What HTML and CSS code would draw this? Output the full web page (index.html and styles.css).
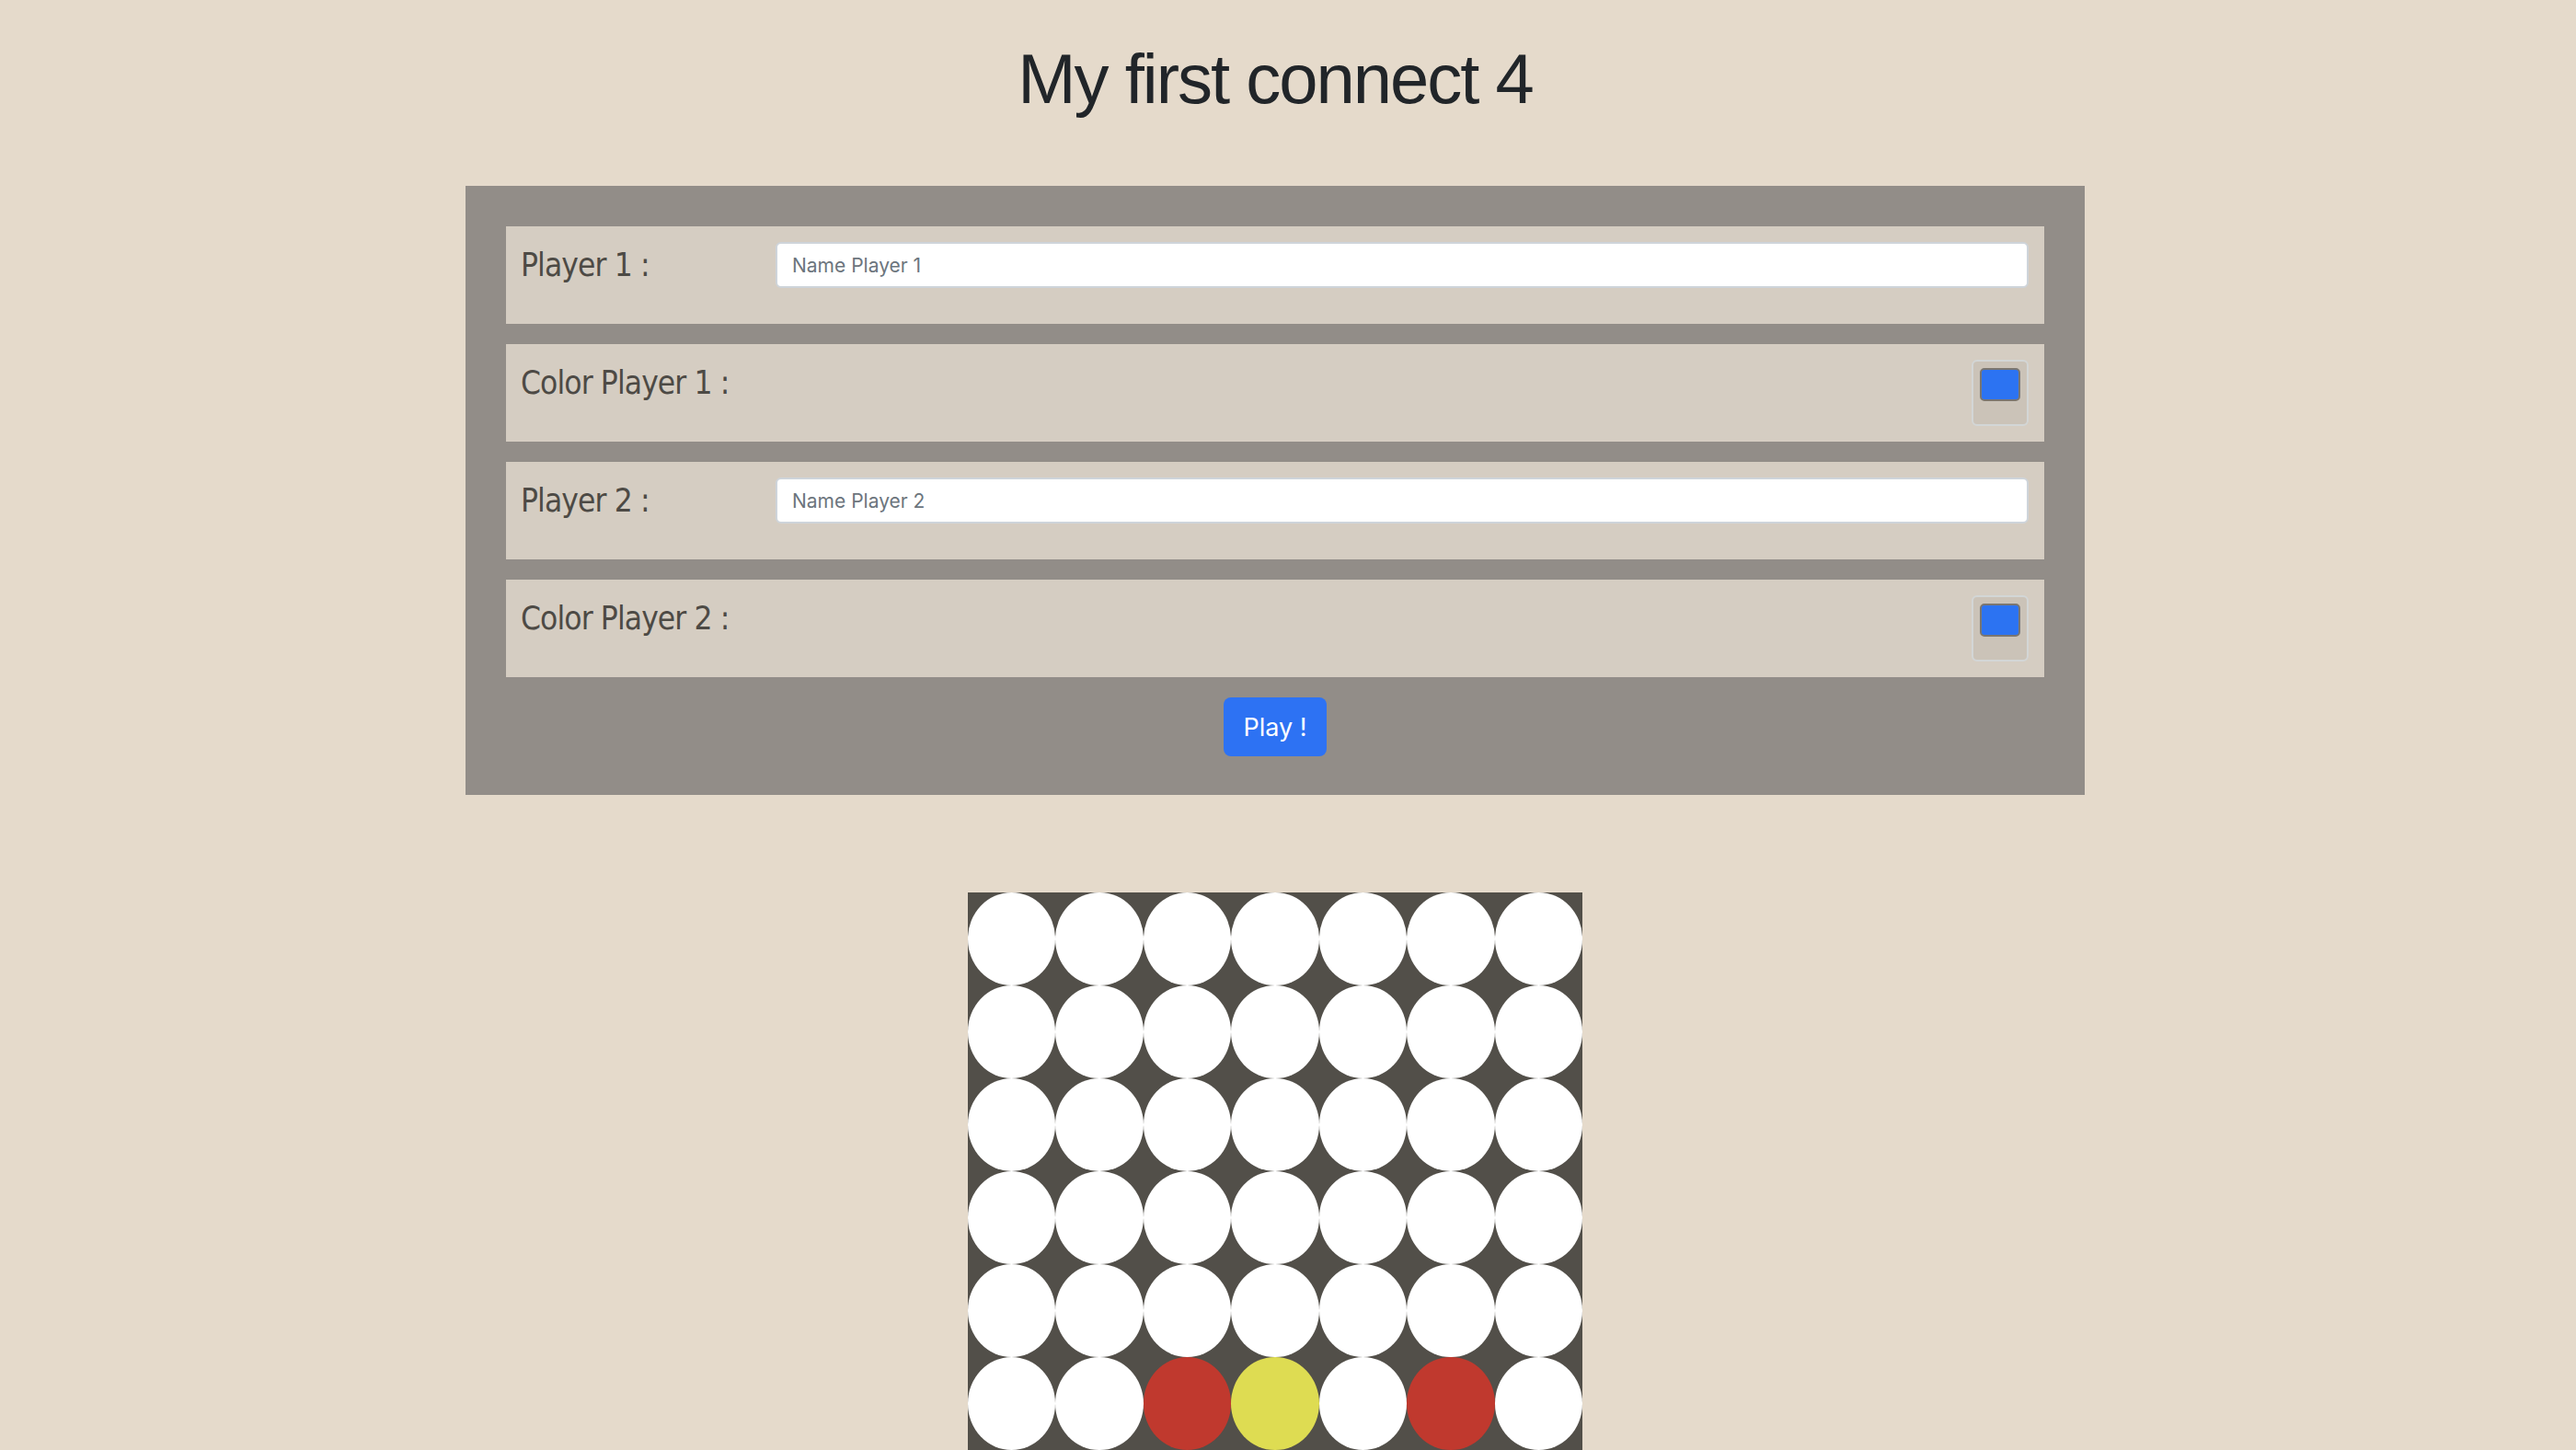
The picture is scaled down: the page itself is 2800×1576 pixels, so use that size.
FILE: index.html
```html
<!DOCTYPE html>
<html lang="en">
<head>
<meta charset="utf-8">
<title>My first connect 4</title>
<link rel="stylesheet" href="styles.css">
</head>
<body>
<div class="page">
  <h1 class="title">My first connect 4</h1>
  <form class="setup">
    <div class="row">
      <label class="label" for="p1">Player 1 :</label>
      <input class="name" id="p1" type="text" placeholder="Name Player 1">
    </div>
    <div class="row">
      <span class="label">Color Player 1 :</span>
      <div class="picker"><div class="swatch"></div></div>
    </div>
    <div class="row">
      <label class="label" for="p2">Player 2 :</label>
      <input class="name" id="p2" type="text" placeholder="Name Player 2">
    </div>
    <div class="row">
      <span class="label">Color Player 2 :</span>
      <div class="picker"><div class="swatch"></div></div>
    </div>
    <div class="actions">
      <button class="play" type="button">Play !</button>
    </div>
  </form>
  <div class="board">
    <div class="cell"></div><div class="cell"></div><div class="cell"></div><div class="cell"></div><div class="cell"></div><div class="cell"></div><div class="cell"></div>
    <div class="cell"></div><div class="cell"></div><div class="cell"></div><div class="cell"></div><div class="cell"></div><div class="cell"></div><div class="cell"></div>
    <div class="cell"></div><div class="cell"></div><div class="cell"></div><div class="cell"></div><div class="cell"></div><div class="cell"></div><div class="cell"></div>
    <div class="cell"></div><div class="cell"></div><div class="cell"></div><div class="cell"></div><div class="cell"></div><div class="cell"></div><div class="cell"></div>
    <div class="cell"></div><div class="cell"></div><div class="cell"></div><div class="cell"></div><div class="cell"></div><div class="cell"></div><div class="cell"></div>
    <div class="cell"></div><div class="cell"></div><div class="cell red"></div><div class="cell yellow"></div><div class="cell"></div><div class="cell red"></div><div class="cell"></div>
  </div>
</div>
</body>
</html>
```

FILE: styles.css
```css
html {
  overflow: hidden;
}

body {
  margin: 0;
  background: #e5dacb;
  font-family: Inter, "Liberation Sans", sans-serif;
}

.page {
  width: 2772px;
  display: flex;
  flex-direction: column;
  align-items: center;
}

.title {
  margin: 0;
  padding-top: 40px;
  font-family: "Liberation Sans", Arial, sans-serif;
  font-weight: 400;
  font-size: 76px;
  letter-spacing: -2px;
  line-height: 92px;
  color: #212529;
  text-align: center;
}

.setup {
  margin-top: 70px;
  width: 1760px;
  box-sizing: border-box;
  background: #928d88;
  padding: 44px 44px 42px;
  display: flex;
  flex-direction: column;
  gap: 22px;
}

.row {
  height: 106px;
  box-sizing: border-box;
  background: #d5cdc2;
  padding: 16px;
  display: flex;
  align-items: flex-start;
}

.label {
  width: 277px;
  flex: none;
  font-family: "DejaVu Sans Condensed", "DejaVu Sans", sans-serif;
  font-size: 35px;
  letter-spacing: -0.9px;
  line-height: 52px;
  color: #4d4a45;
}

.name {
  flex: 1;
  height: 50px;
  margin: 1px 1px 0 0;
  box-sizing: border-box;
  border: 2px solid #ced4da;
  border-radius: 6px;
  background: #fff;
  padding: 0 16px;
  font-family: Inter, "Liberation Sans", sans-serif;
  font-size: 21px;
  color: #495057;
  outline: none;
}

.name::placeholder {
  color: #6c757d;
}

.picker {
  margin: 1px 1px 0 auto;
  width: 62px;
  height: 72px;
  box-sizing: border-box;
  background: #cbc3b8;
  border: 2px solid #d3d6d6;
  border-radius: 6px;
  padding: 7px;
}

.swatch {
  width: 44px;
  height: 36px;
  box-sizing: border-box;
  background: #2c73f2;
  border: 2px solid #7a7671;
  border-radius: 5px;
}

.actions {
  display: flex;
  justify-content: center;
}

.play {
  width: 112px;
  height: 64px;
  border: 0;
  border-radius: 8px;
  background: #2d72f3;
  color: #fff;
  font-family: Inter, "Liberation Sans", sans-serif;
  font-size: 27px;
  padding: 0;
}

.board {
  margin-top: 106px;
  width: 668px;
  background: #524f49;
  display: grid;
  grid-template-columns: repeat(7, 1fr);
  grid-auto-rows: 101px;
}

.cell {
  background: #fff;
  border-radius: 50%;
}

.cell.red {
  background: #c0392e;
}

.cell.yellow {
  background: #dedc52;
}
```
